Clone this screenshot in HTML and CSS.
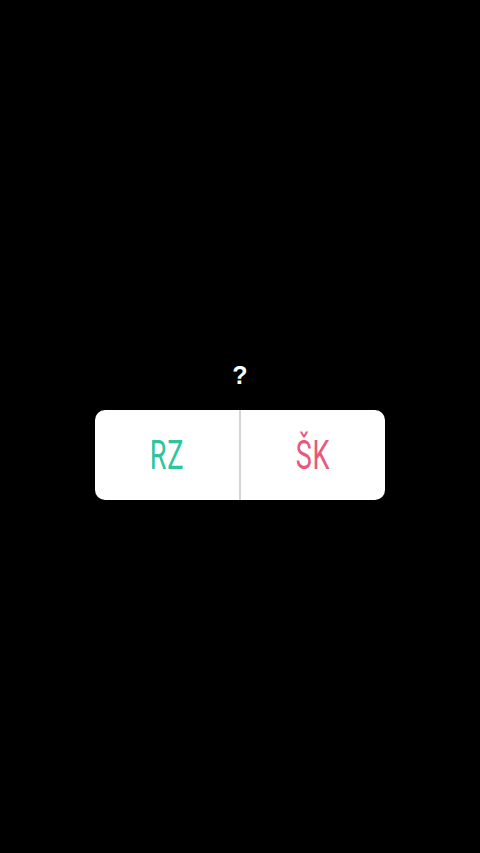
FILE: index.html
```html
<!DOCTYPE html>
<html lang="cs">
<head>
<meta charset="utf-8">
<link rel="stylesheet" href="styles.css">
</head>
<body>
<main class="screen">
  <div class="question">?</div>
  <div class="poll">
    <div class="option option-left"><span class="label label-green">RZ</span></div>
    <div class="divider"></div>
    <div class="option option-right"><span class="label label-pink">ŠK</span></div>
  </div>
</main>
</body>
</html>
```
FILE: styles.css
```css
html, body {
  margin: 0;
  padding: 0;
  background: #000;
}
.screen {
  width: 480px;
  height: 853px;
  background: #000;
  display: flex;
  flex-direction: column;
  align-items: center;
  padding-top: 360px;
  box-sizing: border-box;
}
.question {
  color: #fff;
  font-family: "Liberation Sans", Arial, sans-serif;
  font-weight: 700;
  font-size: 25px;
  line-height: 30px;
  height: 30px;
}
.poll {
  margin-top: 20px;
  width: 290px;
  height: 90px;
  background: #fff;
  border-radius: 10px;
  display: flex;
  align-items: stretch;
}
.option {
  flex: 1;
  display: flex;
  align-items: center;
  justify-content: center;
}
.divider {
  width: 2px;
  background: #d4d4d4;
}
.label {
  font-family: Roboto, "Liberation Sans", sans-serif;
  font-weight: 400;
  font-size: 41px;
  line-height: 1;
  display: inline-block;
  transform: scaleX(0.66);
  letter-spacing: 1px;
  margin-top: 1px;
}
.label-green { color: #2cc59c; }
.label-pink { color: #e8587d; }
```
